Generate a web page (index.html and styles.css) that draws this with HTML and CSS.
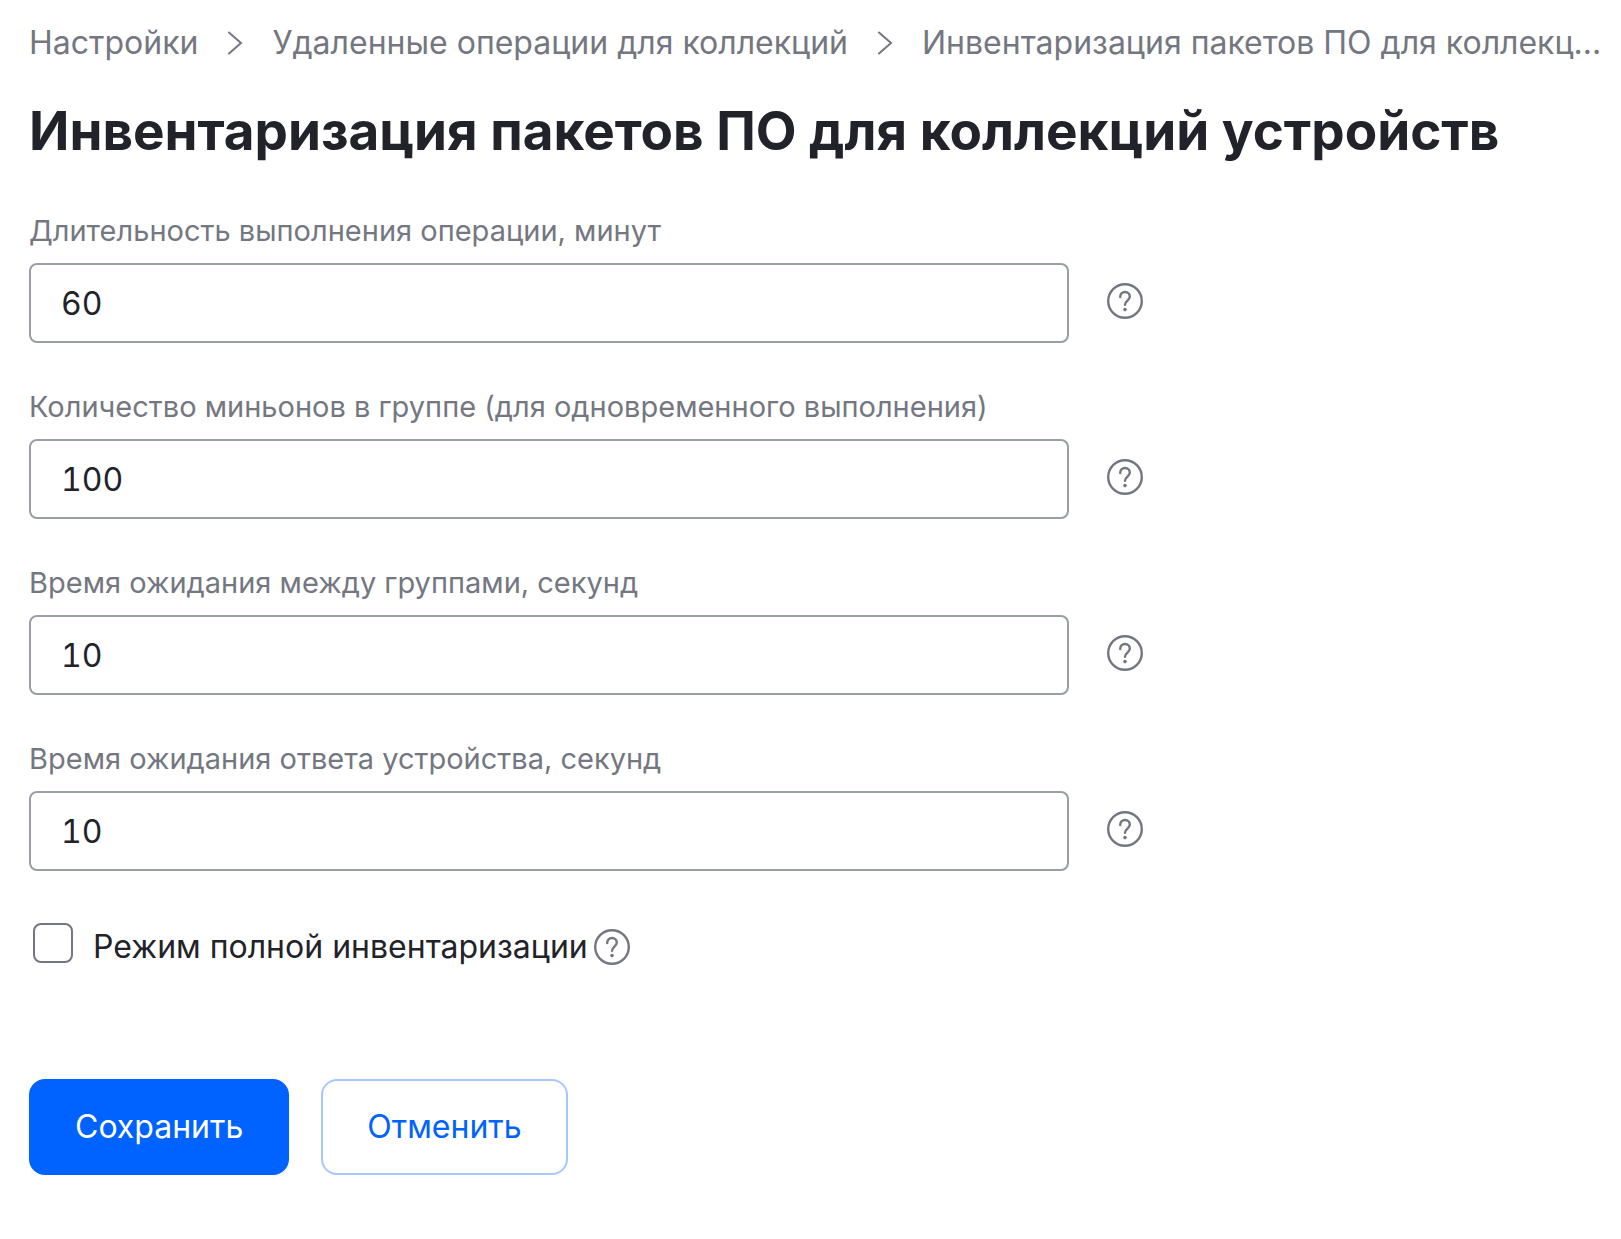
FILE: index.html
```html
<!DOCTYPE html>
<html lang="ru">
<head>
<title>Инвентаризация пакетов ПО для коллекций устройств</title>

<meta charset="UTF-8">
<meta name="viewport" content="width=device-width, initial-scale=1.0">

<link rel="stylesheet" href="styles.css">
</head>

<body>

<svg class="sprite" aria-hidden="true">
  <symbol id="chevron" viewBox="0 0 16 24">
    <path d="M2 1.5 L14 12 L2 22.5" />
  </symbol>
  <symbol id="help" viewBox="0 0 40 40">
    <circle cx="20" cy="20" r="16.8" />
    <path d="M15.2 16 C15.2 12.9 17.2 11 20 11 C22.8 11 24.8 12.9 24.8 15.6 C24.8 19.4 20 19.8 20 23.8" />
    <circle class="dot" cx="20" cy="28.6" r="1.8" />
  </symbol>
</svg>

<nav class="crumbs">
  <a href="#">Настройки</a>
  <svg class="chevron"><use href="#chevron" /></svg>
  <a href="#">Удаленные операции для коллекций</a>
  <svg class="chevron"><use href="#chevron" /></svg>
  <a href="#" title="Инвентаризация пакетов ПО для коллекций устройств">Инвентаризация пакетов ПО для коллекц...</a>
</nav>

<h1>Инвентаризация пакетов ПО для коллекций устройств</h1>

<form>
  <div class="field">
    <label for="duration">Длительность выполнения операции, минут</label>
    <div class="row">
      <input type="text" id="duration" value="60">
      <button type="button" class="help" aria-label="Справка"><svg><use href="#help" /></svg></button>
    </div>
  </div>
  <div class="field">
    <label for="minions">Количество миньонов в группе (для одновременного выполнения)</label>
    <div class="row">
      <input type="text" id="minions" value="100">
      <button type="button" class="help" aria-label="Справка"><svg><use href="#help" /></svg></button>
    </div>
  </div>
  <div class="field">
    <label for="group_wait">Время ожидания между группами, секунд</label>
    <div class="row">
      <input type="text" id="group_wait" value="10">
      <button type="button" class="help" aria-label="Справка"><svg><use href="#help" /></svg></button>
    </div>
  </div>
  <div class="field">
    <label for="reply_wait">Время ожидания ответа устройства, секунд</label>
    <div class="row">
      <input type="text" id="reply_wait" value="10">
      <button type="button" class="help" aria-label="Справка"><svg><use href="#help" /></svg></button>
    </div>
  </div>

  <div class="check">
    <input type="checkbox" id="full_mode">
    <label for="full_mode">Режим полной инвентаризации</label>
    <button type="button" class="help" aria-label="Справка"><svg><use href="#help" /></svg></button>
  </div>

  <div class="actions">
    <button type="submit" class="save">Сохранить</button>
    <button type="button" class="cancel">Отменить</button>
  </div>
</form>

</body>
</html>
```

FILE: styles.css
```css
* {
  box-sizing: border-box;
}
body {
  margin: 0;
  padding: 19px 12px 40px 29px;
  font-family: Inter, "Liberation Sans", sans-serif;
  font-size: 32px;
  line-height: 48px;
  color: #22232a;
  background: #fff;
}
input, button {
  font: inherit;
  color: inherit;
}
.sprite {
  display: none;
}
.crumbs {
  display: flex;
  align-items: center;
  gap: 29px;
  color: #747781;
}
.crumbs a {
  color: inherit;
  text-decoration: none;
  white-space: nowrap;
}
.chevron {
  flex: none;
  width: 16px;
  height: 24px;
  fill: none;
  stroke: #747781;
  stroke-width: 2;
  stroke-linecap: round;
}
h1 {
  margin: 24px 0 40px;
  font-size: 53px;
  line-height: 80px;
  font-weight: 700;
}
.field {
  margin-bottom: 44px;
}
.field label {
  display: block;
  margin-bottom: 12px;
  font-size: 29px;
  line-height: 40px;
  color: #747781;
}
.row {
  display: flex;
  align-items: center;
  gap: 36px;
}
.row input {
  flex: 0 1 1040px;
  min-width: 0;
  height: 80px;
  padding: 0 30px;
  border: 2px solid #9a9fa5;
  border-radius: 8px;
  background: #fff;
  font-variant-numeric: tabular-nums;
}
.help {
  flex: none;
  width: 40px;
  height: 40px;
  padding: 0;
  border: 0;
  background: none;
  cursor: pointer;
}
.help svg {
  display: block;
  width: 40px;
  height: 40px;
  fill: none;
  stroke: #747781;
  stroke-width: 2.4;
  stroke-linecap: round;
}
.dot {
  fill: #747781;
  stroke: none;
}
.row .help {
  margin-bottom: 4px;
}
.check {
  display: flex;
  align-items: center;
  padding: 8px 0 0 4px;
}
.check input {
  appearance: none;
  flex: none;
  align-self: flex-start;
  width: 40px;
  height: 40px;
  margin: 0 20px 0 0;
  border: 2px solid #747781;
  border-radius: 8px;
}
.check input:checked {
  background: #0062ff;
}
.check .help {
  margin-left: 4px;
}
.actions {
  display: flex;
  gap: 32px;
  margin-top: 108px;
}
.actions button {
  height: 96px;
  padding: 0 44px;
  border: 2px solid #0062ff;
  border-radius: 16px;
  cursor: pointer;
}
.actions .save {
  background: #0062ff;
  color: #fff;
}
.actions .cancel {
  border-color: #a6c8ff;
  background: #fff;
  color: #0062ff;
}
```
